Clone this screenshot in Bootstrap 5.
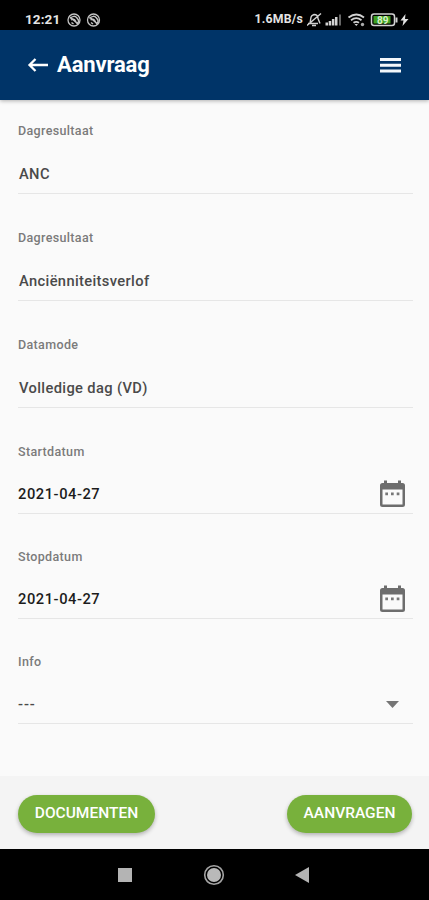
<!DOCTYPE html>
<html lang="nl">
<head>
<meta charset="utf-8">
<meta name="viewport" content="width=device-width, initial-scale=1">
<title>Aanvraag</title>
<link href="https://cdn.jsdelivr.net/npm/bootstrap@5.3.0/dist/css/bootstrap.min.css" rel="stylesheet">
<style>
body{font-family:Roboto,"Liberation Sans",sans-serif;background:#fafafa;height:900px;overflow:hidden}
svg{display:block;flex:none}
.statusbar{height:30px;background:#000;color:#e4e4e4;padding:8px 20px 0 25px;font-weight:700}
.clock{font-size:13.5px;line-height:23px;letter-spacing:.1px;margin-right:7px}
.speed{font-size:12.3px;line-height:23px;letter-spacing:.2px}
.titlebar{height:70px;background:#003468;padding:0 28px 0 27px;box-shadow:0 1px 4px rgba(0,0,0,.3);z-index:1}
.titlebar h1{font-size:22px;line-height:26px;letter-spacing:-.15px;margin-left:9px}
.field{height:107px;margin:0 16px 0 18px}
.field-first{height:94px}
.field-date{height:105px}
.field-start{height:106px}
.field-label{font-size:12.5px;line-height:16px;font-weight:500;color:#7b7b7b;letter-spacing:.35px;margin-bottom:14px}
.field-value{height:41px;border-bottom:1px solid #e6e6e6;font-size:14.7px;font-weight:500;color:#4a4a4a;letter-spacing:.36px;padding:2px 0 0 1px}
.field-date .field-label,.field-start .field-label{margin-bottom:13px}
.field-date .field-value,.field-start .field-value{padding-left:0}
.date-value{color:#1c1c1c;letter-spacing:.55px}
.dashes{letter-spacing:.9px}
.actions{height:73px;background:#f4f4f4;padding:2px 17px 0 18px}
.btn-action{--bs-btn-color:#fff;--bs-btn-bg:#78b13c;--bs-btn-hover-bg:#6ba233;--bs-btn-hover-color:#fff;height:38px;padding:1px 0 0;border:0;font-size:15.5px;font-weight:500;box-shadow:0 2px 4px rgba(0,0,0,.28)}
.btn-docs{width:137px}
.btn-send{width:125px}
.sysnav{height:51px;background:#000;padding:0 120px 0 117px}
</style>
</head>
<body class="d-flex flex-column">
<div class="statusbar d-flex align-items-start justify-content-between">
  <div class="d-flex align-items-center">
    <span class="clock">12:21</span>
    <svg width="34" height="14" viewBox="0 0 34 14" fill="none" stroke="#c4c4c4" stroke-width="1.3">
      <g id="notice"><circle cx="7" cy="7" r="6"/><path d="M3 5.5q4-4 7-.5t.5 5M4 7q3-2 4.500 1t2 3M3 4l8 7M4.500 9.500l2 1.500" stroke-width="1.500"/></g>
      <use href="#notice" x="19.500"/>
    </svg>
  </div>
  <div class="d-flex align-items-center">
    <span class="speed">1.6MB/s</span>
    <svg class="ms-1" width="102" height="16" viewBox="306 11.500 102 16" fill="none" stroke="#d2d2d2">
      <path d="M307 23h10M309 22c1-2 0-5 2-7l2-1c3 0 4 2 4 4l2 5M306 25l14-12M311 25h4" stroke-width="1.400"/>
      <g fill="#d2d2d2" stroke="none"><path d="M324.500 22h2.500v3h-2.500zM327.700 20.500h2.500v4.500h-2.500zM330.900 18.500h2.500v6.500h-2.500zM334 16.500h2.500v8.500H334z"/><path fill="#666" d="M338 14h2v11h-2z"/></g>
      <path d="M347.500 17q8-6 15.500 0M350 19.700q5.300-4 10.500 0M352.500 22.300q2.700-2 5.500 0" stroke-width="1.800"/>
      <path d="M353.500 23.500h3.500l-1.700 2z" fill="#d2d2d2" stroke="none"/><circle cx="361.500" cy="24" r="1.700" fill="#aaa" stroke="none"/>
      <rect x="370.500" y="13.500" width="23" height="11.500" rx="2.500" stroke-width="1.500"/>
      <rect x="372.500" y="15.500" width="17" height="7.500" fill="#3fa022" stroke="none"/>
      <path d="M395.500 17v5" stroke-width="2"/>
      <text x="376" y="23" font-size="10" font-weight="700" fill="#d9f2c8" stroke="none">89</text>
      <path d="M404.500 13.500l-5 6.500h3l-1 5.500 6-7h-3.500z" fill="#e2e2e2" stroke="none"/>
    </svg>
  </div>
</div>
<header class="titlebar d-flex align-items-center position-relative">
  <svg width="21" height="16" viewBox="0 0 21 16" fill="none" stroke="#fff" stroke-width="2.300"><path d="M21 8H3M8.500 2l-6 6 6 6"/></svg>
  <h1 class="fw-bold text-white mb-0">Aanvraag</h1>
  <svg class="ms-auto" width="21" height="15" viewBox="0 0 21 15" fill="#f3f7fb"><path d="M0 0h21v3H0zM0 5.800h21v3H0zM0 11.500h21v3H0z"/></svg>
</header>
<main class="flex-grow-1">
  <div class="field field-first d-flex flex-column justify-content-end">
    <div class="field-label">Dagresultaat</div>
    <div class="field-value d-flex align-items-center">ANC</div>
  </div>
  <div class="field d-flex flex-column justify-content-end">
    <div class="field-label">Dagresultaat</div>
    <div class="field-value d-flex align-items-center">Anciënniteitsverlof</div>
  </div>
  <div class="field d-flex flex-column justify-content-end">
    <div class="field-label">Datamode</div>
    <div class="field-value d-flex align-items-center">Volledige dag (VD)</div>
  </div>
  <div class="field field-start d-flex flex-column justify-content-end">
    <div class="field-label">Startdatum</div>
    <div class="field-value date-value d-flex align-items-center justify-content-between">2021-04-27
      <svg class="me-2" width="25" height="28" viewBox="0 0 25 28"><g id="calendar"><path fill="#6d6d6d" fill-rule="evenodd" d="M4 3V.500h3V3h11V.500h3V3h1.500Q25 3 25 5.500v19q0 2.500-2.500 2.500h-20Q0 27 0 24.500v-19Q0 3 2.500 3zM2.500 9.500v15h20v-15z"/><path fill="#777" d="M5.300 12.500h2.700v2.700H5.300zM11 12.500h2.700v2.700H11zM16.700 12.500h2.700v2.700h-2.700z"/></g></svg>
    </div>
  </div>
  <div class="field field-date d-flex flex-column justify-content-end">
    <div class="field-label">Stopdatum</div>
    <div class="field-value date-value d-flex align-items-center justify-content-between">2021-04-27
      <svg class="me-2" width="25" height="28" viewBox="0 0 25 28"><use href="#calendar"/></svg>
    </div>
  </div>
  <div class="field field-date d-flex flex-column justify-content-end">
    <div class="field-label">Info</div>
    <div class="field-value d-flex align-items-center justify-content-between"><span class="dashes">---</span>
      <svg width="34" height="7" viewBox="0 0 34 7" fill="#757575"><path d="M7 0h13L13.500 7z"/></svg>
    </div>
  </div>
</main>
<footer class="actions d-flex align-items-center justify-content-between">
  <button class="btn btn-action btn-docs rounded-pill" type="button">DOCUMENTEN</button>
  <button class="btn btn-action btn-send rounded-pill" type="button">AANVRAGEN</button>
</footer>
<nav class="sysnav d-flex align-items-center justify-content-between">
  <svg width="15" height="14" viewBox="0 0 15 14"><path fill="#b4b4b4" d="M1 0h14v14H1z"/></svg>
  <svg width="22" height="22" viewBox="0 0 22 22"><circle cx="11" cy="11" r="9.300" fill="none" stroke="#a5a5a5" stroke-width="1.600"/><circle cx="11" cy="11" r="7" fill="#b9b9b9"/></svg>
  <svg width="14" height="16" viewBox="0 0 14 16"><path fill="#b4b4b4" d="M14 0v16L0 8z"/></svg>
</nav>
<script src="https://cdn.jsdelivr.net/npm/bootstrap@5.3.0/dist/js/bootstrap.bundle.min.js"></script>
</body>
</html>
